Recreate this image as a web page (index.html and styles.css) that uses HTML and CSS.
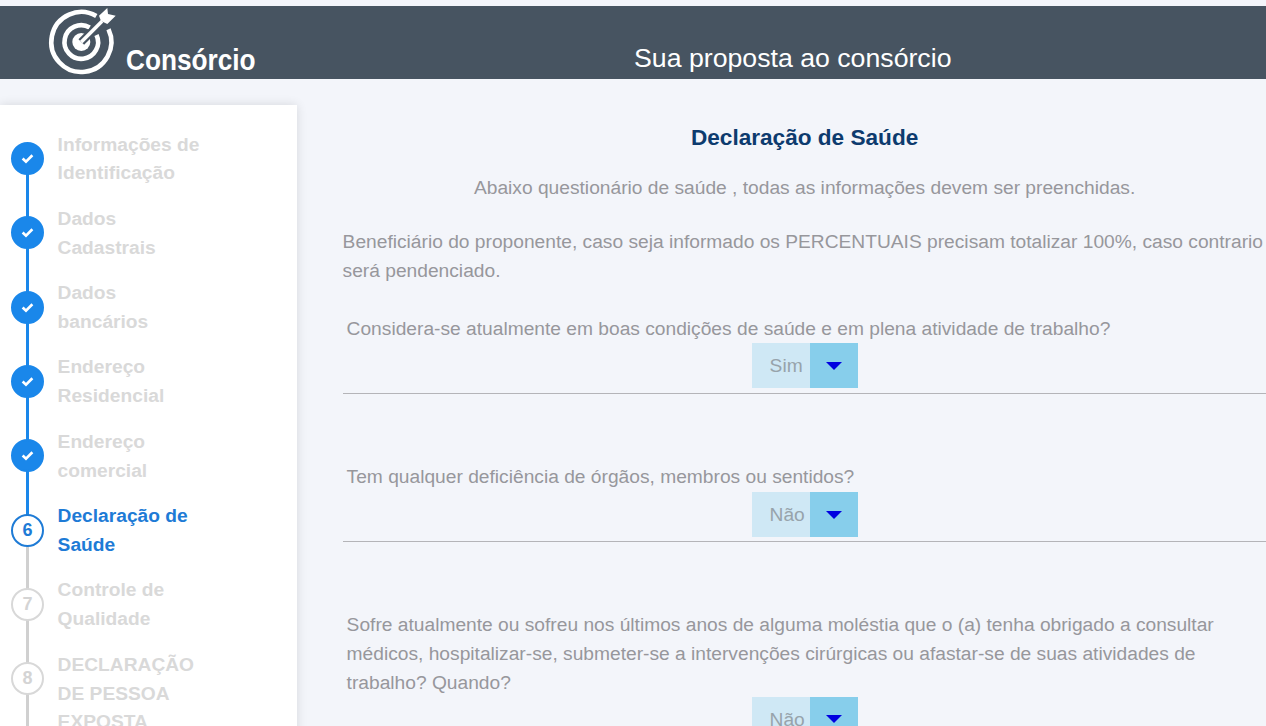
FILE: index.html
```
<!DOCTYPE html>
<html lang="pt">
<head>
<meta charset="utf-8">
<title>Sua proposta ao consórcio</title>
<link rel="stylesheet" href="styles.css">
</head>
<body>
<header class="topbar">
  <div class="brand">
    <svg class="brand-icon" viewBox="0 0 80 76" width="80" height="76" aria-hidden="true">
      <g fill="none" stroke="#fff" stroke-width="4.6">
        <path d="M52.3 12A30 30 0 1 0 64.5 25.3"/>
        <path d="M45.7 23.5A16.8 16.8 0 1 0 52.5 30.9"/>
      </g>
      <circle cx="37.3" cy="38" r="9" fill="#fff"/>
      <path d="M37.3 38 57 18.3" stroke="#475461" stroke-width="8"/>
      <path d="M37.3 38 58 17.3" stroke="#fff" stroke-width="3.6"/>
      <path d="M55 11.7 63.3 4 64 10 71.7 11.7 63.3 20 57 17Z" fill="#fff"/>
    </svg>
    <span class="brand-name">Consórcio</span>
  </div>
  <h1 class="page-title">Sua proposta ao consórcio</h1>
</header>
<div class="layout">
  <aside class="sidebar">
    <ol class="steps">
      <li class="step done"><span class="dot"><svg viewBox="0 0 12 10" width="13" height="11"><path d="M1.5 5 4.6 8 10.5 2" fill="none" stroke="#fff" stroke-width="2.4"/></svg></span><span class="label">Informações de<br>Identificação</span></li>
      <li class="step done"><span class="dot"><svg viewBox="0 0 12 10" width="13" height="11"><path d="M1.5 5 4.6 8 10.5 2" fill="none" stroke="#fff" stroke-width="2.4"/></svg></span><span class="label">Dados<br>Cadastrais</span></li>
      <li class="step done"><span class="dot"><svg viewBox="0 0 12 10" width="13" height="11"><path d="M1.5 5 4.6 8 10.5 2" fill="none" stroke="#fff" stroke-width="2.4"/></svg></span><span class="label">Dados<br>bancários</span></li>
      <li class="step done"><span class="dot"><svg viewBox="0 0 12 10" width="13" height="11"><path d="M1.5 5 4.6 8 10.5 2" fill="none" stroke="#fff" stroke-width="2.4"/></svg></span><span class="label">Endereço<br>Residencial</span></li>
      <li class="step done"><span class="dot"><svg viewBox="0 0 12 10" width="13" height="11"><path d="M1.5 5 4.6 8 10.5 2" fill="none" stroke="#fff" stroke-width="2.4"/></svg></span><span class="label">Endereço<br>comercial</span></li>
      <li class="step current"><span class="dot">6</span><span class="label">Declaração de<br>Saúde</span></li>
      <li class="step"><span class="dot">7</span><span class="label">Controle de<br>Qualidade</span></li>
      <li class="step"><span class="dot">8</span><span class="label">DECLARAÇÃO<br>DE PESSOA<br>EXPOSTA</span></li>
    </ol>
  </aside>
  <main class="content">
    <h2 class="section-title">Declaração de Saúde</h2>
    <p class="intro">Abaixo questionário de saúde , todas as informações devem ser preenchidas.</p>
    <p class="note">Beneficiário do proponente, caso seja informado os PERCENTUAIS precisam totalizar 100%, caso contrario será pendenciado.</p>
    <section class="question q1">
      <p class="q-text">Considera-se atualmente em boas condições de saúde e em plena atividade de trabalho?</p>
      <div class="select"><span class="select-value">Sim</span><span class="select-btn"><i class="caret"></i></span></div>
    </section>
    <section class="question q2">
      <p class="q-text">Tem qualquer deficiência de órgãos, membros ou sentidos?</p>
      <div class="select"><span class="select-value">Não</span><span class="select-btn"><i class="caret"></i></span></div>
    </section>
    <section class="question q3">
      <p class="q-text">Sofre atualmente ou sofreu nos últimos anos de alguma moléstia que o (a) tenha obrigado a consultar médicos, hospitalizar-se, submeter-se a intervenções cirúrgicas ou afastar-se de suas atividades de trabalho? Quando?</p>
      <div class="select"><span class="select-value">Não</span><span class="select-btn"><i class="caret"></i></span></div>
    </section>
  </main>
</div>
</body>
</html>
```
FILE: styles.css
```
* { box-sizing: border-box; }
html, body { margin: 0; height: 726px; overflow: hidden; }
body {
  background: #f3f5fa;
  font-family: "Liberation Sans", Arial, sans-serif;
  padding-top: 6px;
}
.topbar {
  height: 73px;
  background: #475461;
  display: flex;
}
.brand {
  width: 500px;
  flex: none;
  display: flex;
  align-items: flex-start;
  padding-left: 44px;
}
.brand-icon { margin-top: -2px; flex: none; }
.brand-name {
  color: #fff;
  font-weight: 700;
  font-size: 29.5px;
  line-height: 32px;
  margin: 38px 0 0 2px;
  transform: scaleX(.888);
  transform-origin: left center;
}
.page-title {
  margin: 0;
  color: #fff;
  font-weight: 400;
  font-size: 26.7px;
  line-height: 30px;
  padding: 37px 0 0 134px;
}
.layout { display: flex; padding-top: 26px; }
.sidebar {
  width: 297px;
  height: 640px;
  flex: none;
  background: #fff;
  box-shadow: 0 0 10px rgba(0,0,0,.12);
  padding-top: 25px;
}
.steps { list-style: none; margin: 0; padding: 0 0 0 11px; }
.step {
  display: flex;
  gap: 13.6px;
  min-height: 74.33px;
  position: relative;
}
.step::before {
  content: "";
  position: absolute;
  left: 15px;
  top: 14px;
  width: 3px;
  height: 76px;
  background: #d0d0d0;
}
.step.done::before { background: #1a87ea; }
.step:last-child::before { height: 100px; }
.dot {
  position: relative;
  flex: none;
  width: 33px;
  height: 33px;
  margin-top: 12px;
  border-radius: 50%;
  border: 2px solid #d8d8d8;
  background: #fff;
  color: #d4d4d4;
  font-weight: 700;
  font-size: 18px;
  display: flex;
  align-items: center;
  justify-content: center;
}
.done .dot { background: #1a87ea; border-color: #1a87ea; }
.current .dot { border-color: #1e7bd6; color: #1e7bd6; }
.label {
  font-size: 19.2px;
  line-height: 28.8px;
  font-weight: 700;
  color: #d9d9d9;
  padding-top: .5px;
}
.current .label { color: #1e7bd6; }
.content {
  width: 924px;
  margin-left: 45.6px;
  flex: none;
  color: #97979c;
  font-size: 19.2px;
  line-height: 28.8px;
}
.section-title {
  margin: 17.5px 0 0;
  text-align: center;
  color: #0d3b6e;
  font-size: 22.6px;
  line-height: 30px;
  font-weight: 700;
}
.intro { margin: 21.5px 0 0; text-align: center; }
.note { margin: 25px 0 0; }
.question { border-bottom: 1px solid #b4b4b8; padding-left: 4px; }
.q1 { margin-top: 30px; height: 78.6px; }
.q2 { margin-top: 69.4px; height: 78.6px; }
.q3 { margin-top: 69.4px; border: 0; }
.q-text { margin: 1px 0 0; }
.select {
  display: flex;
  width: 106px;
  height: 45px;
  margin: -1px 0 0 405px;
}
.q2 .select { margin-top: 0; }
.select-value {
  width: 58px;
  background: #cfe8f5;
  padding-left: 18px;
  line-height: 45px;
  color: #97a3ab;
}
.select-btn {
  width: 48px;
  background: #87ceeb;
  display: flex;
  align-items: center;
  justify-content: center;
}
.caret {
  width: 0;
  height: 0;
  border: 8px solid transparent;
  border-top: 8px solid #0000e0;
  border-bottom: 0;
}
```
